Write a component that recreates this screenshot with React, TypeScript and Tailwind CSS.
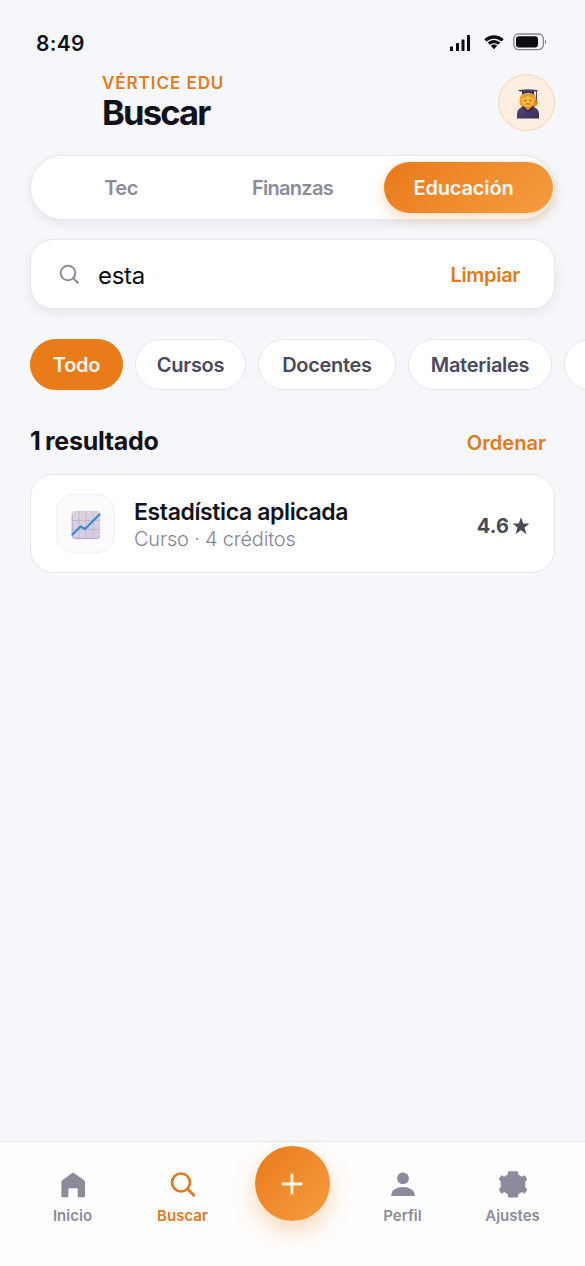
import clsx from "clsx"

function StatusBar() {
    return (
        <div className="flex h-[67px] items-start justify-between pl-[36px] pr-[38px] pt-[32px] text-[#12131a]">
            <span className="text-[21px] leading-6 font-semibold tracking-[0.3px]">8:49</span>
            <div className="flex items-center text-[#0c0d12]">
                <svg width="22" height="18" viewBox="0 0 22 18" fill="currentColor" className="mt-0.5">
                    <rect x="1" y="12.5" width="3" height="4.5" rx=".5" />
                    <rect x="7" y="9" width="3" height="8" rx=".5" />
                    <rect x="12.5" y="5.5" width="3" height="11.5" rx=".5" />
                    <rect x="18" y="1" width="3" height="16" rx=".5" />
                </svg>
                <svg width="20" height="15" viewBox="0 0 20 15" fill="currentColor" className="ml-[13px]">
                    <path d="M10 .3C6.300 .3 2.900 1.700 .3 4.200L2.500 6.600C4.500 4.800 7.100 3.700 10 3.700s5.500 1.100 7.500 2.900l2.200-2.400C17.100 1.700 13.700.3 10 .3Z" />
                    <path d="M10 5c-2.400 0-4.600.9-6.300 2.500l2.200 2.300A5.900 5.900 0 0 1 10 8.200c1.600 0 3 .6 4.100 1.600l2.200-2.300A9 9 0 0 0 10 5Z" />
                    <path d="M10 9.500c-1.200 0-2.300.5-3.200 1.300l3.200 3.400 3.200-3.400c-.9-.8-2-1.300-3.200-1.300Z" />
                </svg>
                <svg width="34" height="18" viewBox="0 0 34 18" fill="none" className="ml-[9px]">
                    <rect x=".8" y="1" width="29.600" height="15.600" rx="4.800" stroke="#85868b" strokeWidth="1.300" />
                    <rect x="3" y="3.200" width="22" height="11.200" rx="3" fill="currentColor" />
                    <path d="M32 6.700c1.600.8 1.600 3.700 0 4.500Z" fill="#85868b" />
                </svg>
            </div>
        </div>
    )
}

function GraduateIcon() {
    return (
        <svg width="24" height="30" viewBox="0 0 24 30" className="mt-[3px] ml-[3px]">
            <defs>
                <linearGradient id="gown" x1="0" y1="0" x2="1" y2="1">
                    <stop offset="0" stopColor="#574878" />
                    <stop offset="1" stopColor="#382d5c" />
                </linearGradient>
                <linearGradient id="hair" x1="0" y1="0" x2="1" y2="1">
                    <stop offset="0" stopColor="#f0ae3b" />
                    <stop offset="1" stopColor="#df851c" />
                </linearGradient>
            </defs>
            <path d="M5 6c-1.500 3-2 7-1 10l4 3h9l4-3c1-2 .2-3.500-.8-5L19 5Z" fill="url(#hair)" />
            <path d="M1 29.500V25c0-4 3-7 6.500-7.300h8.500c4 .3 7 3.300 7 7.300v4.500Z" fill="url(#gown)" />
            <path d="M8 16h8v2.500l-4 3-4-3Z" fill="#df8c2a" />
            <path d="m7 17 5 4.500 5-4.500 1.500 1.500L12 24l-6.500-5.500Z" fill="#352a50" />
            <ellipse cx="12" cy="11.500" rx="6.300" ry="6.500" fill="#fbb937" />
            <path d="M5.500 10c2.500-.6 5-2 6-3.500 1.500 1.500 4 2.500 7 3L18 5H6Z" fill="#e99d2c" />
            <circle cx="9.500" cy="11.500" r=".8" fill="#593923" />
            <circle cx="14.500" cy="11.500" r=".8" fill="#593923" />
            <path d="M10 15.200q2-.8 4 0" stroke="#ad4f27" strokeWidth="1" fill="none" />
            <path d="M6 2h12v3.200q-6-1.700-12 0Z" fill="#332d48" />
            <path d="M2.500 1 12 .3l9.500.7v1L12 4 2.500 2Z" fill="#484158" />
            <path d="M20.500 1.500v10.500" stroke="#554764" strokeWidth="1" />
            <path d="M19.500 11.500h2l.5 3.500h-3Z" fill="#d3892c" />
        </svg>
    )
}

function Header() {
    return (
        <header className="flex h-[88px] justify-between pr-[30px] pl-[102px]">
            <div className="pt-[5px]">
                <p className="text-[17px] leading-[22px] font-semibold tracking-[0.95px] text-[#e47b1c]">VÉRTICE EDU</p>
                <h1 className="text-[34.5px] leading-[37px] font-bold tracking-[-1.8px] text-[#12131a]">Buscar</h1>
            </div>
            <div className="mt-[6.5px] flex size-[57px] items-center justify-center rounded-full border-[1.5px] border-[#f9d3ae] bg-[#feeee1]">
                <GraduateIcon />
            </div>
        </header>
    )
}

function Tabs() {
    return (
        <div className="mx-[30px] flex h-[65px] rounded-full border border-[#e8e9ee] bg-white pt-1.5 text-[20px] font-semibold text-[#8b8b9b] shadow-[0_4px_10px_rgba(20,20,30,0.07)]">
            <button className="h-[51px] w-[181px] pr-px tracking-[-0.5px]">Tec</button>
            <button className="h-[51px] w-[161px] tracking-[-0.7px]">Finanzas</button>
            <button className="ml-[11px] h-[51px] w-[169px] shrink-0 rounded-full bg-linear-135 from-[#e97a18] to-[#f59d3f] pr-[10px] tracking-[-0.15px] text-[#fffaf3] shadow-[0_5px_14px_rgba(235,125,30,0.28)]">
                Educación
            </button>
        </div>
    )
}

function SearchBox() {
    return (
        <div className="mx-[30px] mt-[19px] flex h-[70px] items-center rounded-[23px] border border-[#e8e9ee] bg-white pt-px pr-[34px] pl-[28px] shadow-[0_4px_12px_rgba(20,20,30,0.07)]">
            <svg width="22" height="22" viewBox="0 0 22 22" fill="none" stroke="#8b8b9b" strokeWidth="2">
                <circle cx="9" cy="9" r="7.300" />
                <path d="m14.300 14.300 4.500 4.500" strokeLinecap="round" />
            </svg>
            <span className="ml-[17px] flex-1 pt-0.5 text-[24px] tracking-[-0.3px] text-[#0c0d12]">esta</span>
            <button className="text-[20px] font-semibold tracking-[-0.3px] text-[#e17a1b]">Limpiar</button>
        </div>
    )
}

const chips = [
    { label: "Todo", size: "w-[93px]", active: true },
    { label: "Cursos", size: "w-[111px]" },
    { label: "Docentes", size: "w-[138px]" },
    { label: "Materiales", size: "w-[144px]" },
    { label: "", size: "w-[120px]" },
]

function Chips() {
    return (
        <div className="mt-[30px] flex gap-3 overflow-hidden pl-[30px] text-[20px] font-semibold tracking-[-0.3px]">
            {chips.map((chip, i) => (
                <button
                    key={i}
                    className={clsx(
                        "h-[51px] shrink-0 rounded-full border",
                        chip.size,
                        chip.active ? "border-[#e97c18] bg-[#e97c18] text-[#fff8ef]" : "border-[#e6e7ed] bg-white text-[#494959]"
                    )}
                >
                    {chip.label}
                </button>
            ))}
        </div>
    )
}

function ChartIcon() {
    return (
        <svg width="30" height="30" viewBox="0 0 30 30">
            <defs>
                <linearGradient id="paper" x1="0" y1="0" x2=".5" y2="1">
                    <stop offset="0" stopColor="#d9d5dc" />
                    <stop offset="1" stopColor="#d8cae5" />
                </linearGradient>
            </defs>
            <rect x=".8" y=".8" width="28.400" height="28.400" rx="4" fill="url(#paper)" />
            <path d="M8 1v28M15 1v28M22 1v28M1 10.500h28M1 19.500h28" stroke="#bdb4c6" strokeWidth=".8" />
            <path d="M1.200 4v21q0 3.500 4 3.500h20q3.500 0 3.500-3" stroke="#b9a8c9" fill="none" />
            <path d="M1.500 24.500 9.500 16.500l4.500 2.500L28.500 4.500" stroke="#378bcb" strokeWidth="2.200" fill="none" strokeLinejoin="round" strokeLinecap="round" />
        </svg>
    )
}

function Results() {
    return (
        <section className="mt-[34px] px-[30px]">
            <div className="flex h-[50px] justify-between pr-[9px]">
                <h2 className="pt-px text-[25px] leading-[33px] font-bold tracking-[-0.3px] [word-spacing:-1px] text-[#12131a]">1 resultado</h2>
                <button className="h-[38px] text-[20px] font-semibold tracking-[0.05px] text-[#e17a1b]">Ordenar</button>
            </div>
            <div className="flex h-[99px] items-center rounded-[23px] border border-[#e6e7ed] bg-white pr-[24px] pl-[25px]">
                <div className="flex size-[59px] items-center justify-center rounded-[18px] border-[1.5px] border-[#f0f0f5] bg-[#fbfbfe] pt-[3px]">
                    <ChartIcon />
                </div>
                <div className="ml-[19px] flex-1 pt-[3px]">
                    <h3 className="text-[23px] leading-[28px] font-semibold tracking-[-0.38px] text-[#12131a]">Estadística aplicada</h3>
                    <p className="text-[20px] leading-[26px] font-light tracking-[-0.2px] text-[#858594]">Curso · 4 créditos</p>
                </div>
                <div className="flex items-center gap-[3px] pt-[4px] text-[#494959]">
                    <span className="text-[20px] font-bold tracking-[0.1px]">4.6</span>
                    <svg width="18" height="18" viewBox="0 0 18 18" fill="currentColor">
                        <path d="m9 .3 2.200 6.200h6.300l-5 4 1.900 6.500L9 13.200 3.600 17l1.900-6.500-5-4h6.300Z" />
                    </svg>
                </div>
            </div>
        </section>
    )
}

function NavItem({ label, active, children }: { label: string; active?: boolean; children: React.ReactNode }) {
    return (
        <button className={clsx("flex w-[110px] flex-col items-center pt-[28px]", active ? "text-[#e17a1b]" : "text-[#8b8b9b]")}>
            <svg width="30" height="30" viewBox="0 0 30 30" fill="currentColor">
                {children}
            </svg>
            <span className="mt-[6px] text-[15px] leading-[20px] font-semibold">{label}</span>
        </button>
    )
}

function BottomNav() {
    return (
        <nav className="flex h-[125px] items-start justify-center border-t-[1.5px] border-[#e8e9ee] bg-[#fefefe]">
            <NavItem label="Inicio">
                <path d="M14.200 2.900a1.500 1.500 0 0 1 1.700 0l10.200 7.400q.9.700.9 1.800v14q0 1.200-1.200 1.200h-5.600q-.5 0-.5-.5v-7.600q0-1-1-1h-7.300q-1 0-1 1v7.600q0 .5-.5.5H4.600q-1.200 0-1.200-1.200v-14q0-1.100.9-1.800Z" />
            </NavItem>
            <NavItem label="Buscar" active>
                <circle cx="13" cy="12.500" r="9" fill="none" stroke="currentColor" strokeWidth="2.700" />
                <path d="m19.500 19 6.300 6.300" stroke="currentColor" strokeWidth="3" strokeLinecap="round" />
            </NavItem>
            <div className="flex w-[110px] justify-center pt-[4px]">
                <button className="flex size-[75px] items-center justify-center rounded-full bg-linear-135 from-[#e97a18] to-[#f59d3f] shadow-[0_10px_25px_rgba(240,130,30,0.32)]">
                    <svg width="22" height="22" viewBox="0 0 22 22" stroke="#fff8ef" strokeWidth="2.800" strokeLinecap="round" className="mt-px mr-[2px]">
                        <path d="M11 1.800v18.400M1.800 11h18.400" />
                    </svg>
                </button>
            </div>
            <NavItem label="Perfil">
                <circle cx="15" cy="8.300" r="5.900" />
                <path d="M3.300 25.900v-1c0-4.800 5.600-7.900 11.700-7.900s11.700 3.100 11.700 7.900v1Z" />
            </NavItem>
            <NavItem label="Ajustes">
                <path d="M11 1.300h8q.8 0 1 .9l.3 2.300 3.500 2.200 2.200-1.300q.8-.3 1.200.4l1.700 3q.4.800-.2 1.300l-1.400 1.300v6l1.400 1.300q.6.500.2 1.300l-1.700 3q-.4.700-1.200.4l-2.200-1.300-3.500 2.200-.3 2.300q-.2.900-1 .9h-8q-.8 0-1-.9l-.3-2.300-3.500-2.200-2.200 1.300q-.8.300-1.200-.4L1.100 20q-.4-.8.200-1.300l1.400-1.300v-6L1.300 10.100q-.6-.5-.2-1.300l1.700-3q.4-.7 1.200-.4l2.200 1.300 3.500-2.200.3-2.300q.2-.9 1-.9Z" />
            </NavItem>
        </nav>
    )
}

export default function App() {
    return (
        <div className="flex h-[1266px] w-[585px] flex-col overflow-hidden bg-[#f5f7fb] font-['Inter',sans-serif]">
            <StatusBar />
            <Header />
            <Tabs />
            <SearchBox />
            <Chips />
            <Results />
            <div className="flex-1" />
            <BottomNav />
        </div>
    )
}
